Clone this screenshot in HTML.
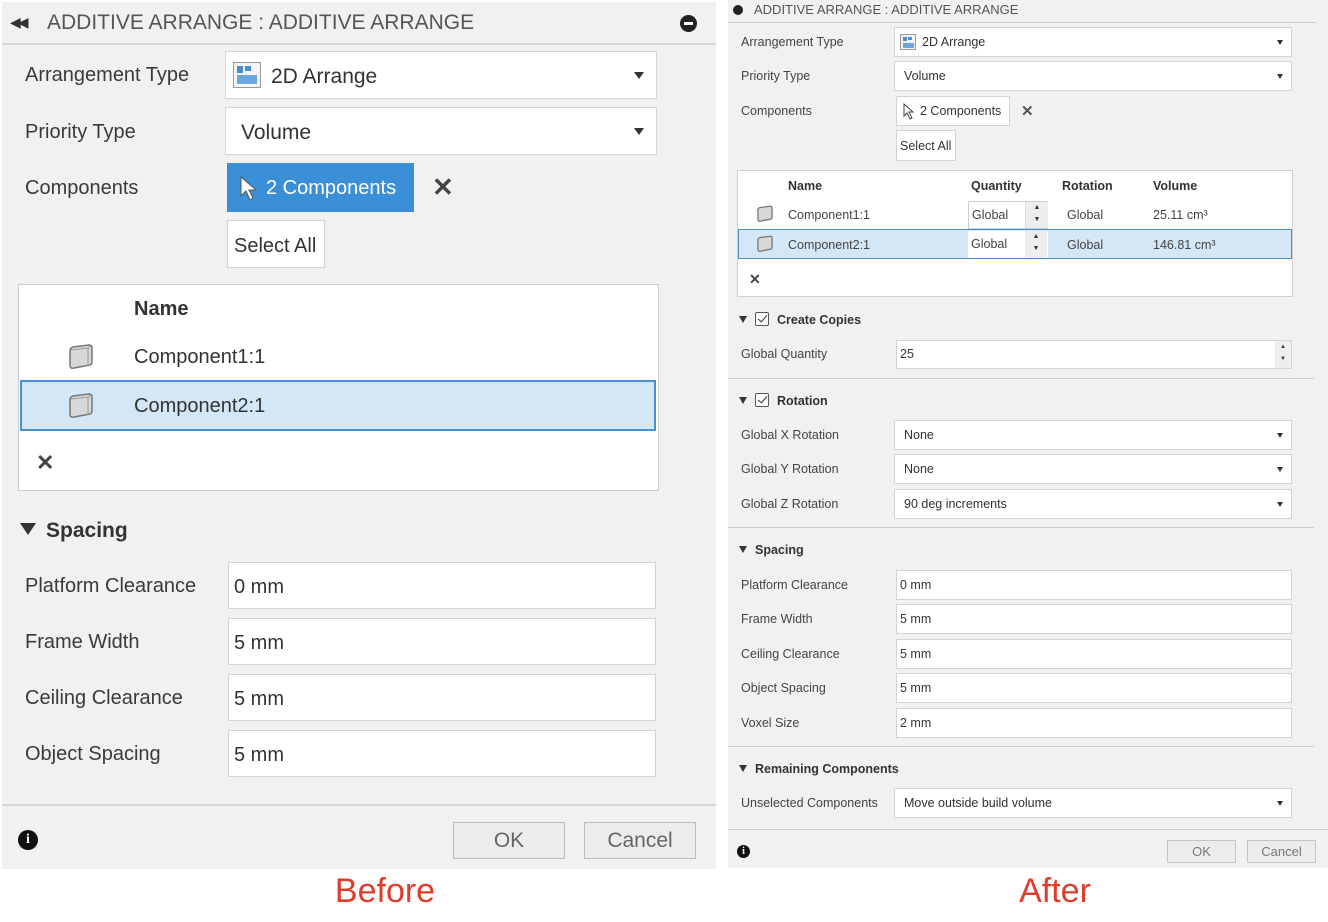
<!DOCTYPE html>
<html><head><meta charset="utf-8"><style>
*{margin:0;padding:0;box-sizing:border-box}
body{width:1328px;height:922px;background:#fff;position:relative;overflow:hidden;font-family:"Liberation Sans",Arial,sans-serif;color:#333}
.a{position:absolute}
.p{background:#f1f1f1}
.L{font-size:20px;color:#3a3a3a;white-space:nowrap}
.box{position:absolute;background:#fff;border:1px solid #d4d4d4}
.dd:after{content:"";position:absolute;right:12px;top:50%;margin-top:-3px;border-left:5px solid transparent;border-right:5px solid transparent;border-top:7px solid #333}
.ds:after{content:"";position:absolute;right:8px;top:50%;margin-top:-2px;border-left:3px solid transparent;border-right:3px solid transparent;border-top:5px solid #333}
.S{font-size:12.5px;color:#444;white-space:nowrap}
.sep{position:absolute;height:2px;background:#d6d6d6}
.tri{display:inline-block;border-left:8px solid transparent;border-right:8px solid transparent;border-top:12px solid #333;margin-right:10px;vertical-align:2px}
.tri2{display:inline-block;border-left:4px solid transparent;border-right:4px solid transparent;border-top:7px solid #333;margin-right:8px;vertical-align:1px}
.cb{display:inline-block;width:14px;height:14px;border:1px solid #555;border-radius:2px;background:#fff;vertical-align:-2px;margin-right:8px;position:relative}
.cb:after{content:"";position:absolute;left:4px;top:0px;width:4px;height:8px;border:solid #333;border-width:0 1.5px 1.5px 0;transform:rotate(40deg)}
</style></head><body>

<!-- LEFT PANEL -->
<div class="a p" style="left:2px;top:2px;width:714px;height:867px"></div>
<div class="a" style="left:10px;top:14px;font-size:14px;color:#333;letter-spacing:-3px">◀◀</div>
<div class="a" style="left:47px;top:11px;font-size:21px;color:#555">ADDITIVE ARRANGE : ADDITIVE ARRANGE</div>
<div class="a" style="left:680px;top:15px;width:17px;height:17px;border-radius:50%;background:#222"><div class="a" style="left:4px;top:7px;width:9px;height:3px;background:#fff"></div></div>
<div class="sep" style="left:2px;top:43px;width:714px"></div>

<div class="a L" style="left:25px;top:64px">Arrangement Type</div>
<div class="box dd" style="left:225px;top:51px;width:432px;height:48px">
 <div class="a" style="left:7px;top:10px;width:28px;height:26px;border:1px solid #999;background:#f5f5f5">
  <div class="a" style="left:3px;top:3px;width:6px;height:7px;background:#4a8fd6"></div>
  <div class="a" style="left:11px;top:3px;width:6px;height:5px;background:#4a8fd6"></div>
  <div class="a" style="left:3px;top:12px;width:20px;height:9px;background:#6aa6e0"></div>
 </div>
 <div class="a" style="left:45px;top:13px;font-size:21px;color:#333">2D Arrange</div>
</div>
<div class="a L" style="left:25px;top:121px">Priority Type</div>
<div class="box dd" style="left:225px;top:107px;width:432px;height:48px"><div class="a" style="left:15px;top:13px;font-size:21px;color:#333">Volume</div></div>
<div class="a L" style="left:25px;top:177px">Components</div>
<div class="a" style="left:227px;top:163px;width:187px;height:49px;background:#3b8fd6">
 <svg class="a" style="left:12px;top:12px" width="20" height="28" viewBox="0 0 20 28"><path d="M2 2 L2 21 L7 16 L11 25 L14 23 L10 15 L17 15 Z" fill="#fff" stroke="#555" stroke-width="1"/></svg>
 <div class="a" style="left:39px;top:14px;font-size:20px;color:#fff">2 Components</div>
</div>
<div class="a" style="left:432px;top:172px;font-size:26px;color:#444;font-weight:bold">✕</div>
<div class="box" style="left:227px;top:220px;width:98px;height:48px"><div class="a" style="left:6px;top:14px;font-size:20px;color:#333">Select All</div></div>

<div class="box" style="left:18px;top:284px;width:641px;height:207px;border-color:#ccc">
 <div class="a" style="left:115px;top:13px;font-size:20px;font-weight:bold;color:#333">Name</div>
 <svg class="a" style="left:48px;top:58px" width="28" height="28" viewBox="0 0 28 28"><path d="M3 8 Q3 5 6 4 L22 2 Q25 2 25 5 L25 19 Q25 21 23 22 L7 25 Q3 26 3 22 Z" fill="#d8d8d8" stroke="#777" stroke-width="1.5"/><path d="M4 7 L21 5 L21 23 M21 5 L24 3" fill="none" stroke="#999" stroke-width="1"/></svg>
 <div class="a" style="left:115px;top:61px;font-size:20px;color:#333">Component1:1</div>
 <div class="a" style="left:1px;top:95px;width:636px;height:51px;background:#d4e7f6;border:2px solid #4a90d0"></div>
 <svg class="a" style="left:48px;top:107px" width="28" height="28" viewBox="0 0 28 28"><path d="M3 8 Q3 5 6 4 L22 2 Q25 2 25 5 L25 19 Q25 21 23 22 L7 25 Q3 26 3 22 Z" fill="#d8d8d8" stroke="#777" stroke-width="1.5"/><path d="M4 7 L21 5 L21 23 M21 5 L24 3" fill="none" stroke="#999" stroke-width="1"/></svg>
 <div class="a" style="left:115px;top:110px;font-size:20px;color:#333">Component2:1</div>
 <div class="a" style="left:17px;top:165px;font-size:22px;color:#444;font-weight:bold">✕</div>
</div>

<div class="a" style="left:20px;top:519px;font-size:21px;font-weight:bold;color:#333"><span class="tri"></span>Spacing</div>
<div class="a L" style="left:25px;top:575px">Platform Clearance</div>
<div class="box" style="left:228px;top:562px;width:428px;height:47px"><div class="a" style="left:5px;top:13px;font-size:20px">0 mm</div></div>
<div class="a L" style="left:25px;top:631px">Frame Width</div>
<div class="box" style="left:228px;top:618px;width:428px;height:47px"><div class="a" style="left:5px;top:13px;font-size:20px">5 mm</div></div>
<div class="a L" style="left:25px;top:687px">Ceiling Clearance</div>
<div class="box" style="left:228px;top:674px;width:428px;height:47px"><div class="a" style="left:5px;top:13px;font-size:20px">5 mm</div></div>
<div class="a L" style="left:25px;top:743px">Object Spacing</div>
<div class="box" style="left:228px;top:730px;width:428px;height:47px"><div class="a" style="left:5px;top:13px;font-size:20px">5 mm</div></div>
<div class="sep" style="left:2px;top:804px;width:714px"></div>
<div class="a" style="left:18px;top:830px;width:20px;height:20px;border-radius:50%;background:#111;color:#fff;font:bold 14px 'Liberation Serif',serif;text-align:center;line-height:20px">i</div>
<div class="a" style="left:453px;top:822px;width:112px;height:37px;border:1px solid #bbb;background:#ececec;font-size:21px;color:#666;text-align:center;line-height:35px">OK</div>
<div class="a" style="left:584px;top:822px;width:112px;height:37px;border:1px solid #bbb;background:#ececec;font-size:21px;color:#666;text-align:center;line-height:35px">Cancel</div>
<div class="a" style="left:285px;top:872px;width:200px;text-align:center;font-size:34px;color:#e03c2c">Before</div>

<!-- RIGHT PANEL -->
<div class="a p" style="left:728px;top:0;width:600px;height:868px"></div>
<div class="a" style="left:733px;top:5px;width:10px;height:10px;border-radius:50%;background:#222"></div>
<div class="a" style="left:754px;top:2px;font-size:13px;color:#555">ADDITIVE ARRANGE : ADDITIVE ARRANGE</div>
<div class="sep" style="left:728px;top:22px;width:588px;height:1px;background:#ccc"></div>

<div class="a S" style="left:741px;top:35px">Arrangement Type</div>
<div class="box ds" style="left:894px;top:27px;width:398px;height:30px">
 <div class="a" style="left:5px;top:6px;width:16px;height:16px;border:1px solid #999;background:#f5f5f5"><div class="a" style="left:2px;top:2px;width:4px;height:4px;background:#4a8fd6"></div><div class="a" style="left:7px;top:2px;width:4px;height:3px;background:#4a8fd6"></div><div class="a" style="left:2px;top:8px;width:11px;height:5px;background:#6aa6e0"></div></div>
 <div class="a S" style="left:27px;top:7px;color:#333">2D Arrange</div>
</div>
<div class="a S" style="left:741px;top:69px">Priority Type</div>
<div class="box ds" style="left:894px;top:61px;width:398px;height:30px"><div class="a S" style="left:9px;top:7px;color:#333">Volume</div></div>
<div class="a S" style="left:741px;top:104px">Components</div>
<div class="box" style="left:896px;top:96px;width:114px;height:30px">
 <svg class="a" style="left:6px;top:6px" width="12" height="18" viewBox="0 0 12 18"><path d="M1 1 L1 13 L4 10 L7 16 L9 15 L6 9 L10 9 Z" fill="#fff" stroke="#444" stroke-width="1"/></svg>
 <div class="a S" style="left:23px;top:7px;color:#333">2 Components</div>
</div>
<div class="a" style="left:1021px;top:102px;font-size:15px;color:#555;font-weight:bold">✕</div>
<div class="box" style="left:896px;top:130px;width:60px;height:31px"><div class="a S" style="left:3px;top:8px;color:#333">Select All</div></div>

<div class="box" style="left:737px;top:170px;width:556px;height:127px;border-color:#d0d0d0">
 <div class="a S" style="left:50px;top:8px;font-weight:bold;color:#333">Name</div>
 <div class="a S" style="left:233px;top:8px;font-weight:bold;color:#333">Quantity</div>
 <div class="a S" style="left:324px;top:8px;font-weight:bold;color:#333">Rotation</div>
 <div class="a S" style="left:415px;top:8px;font-weight:bold;color:#333">Volume</div>
 <svg class="a" style="left:18px;top:34px" width="18" height="18" viewBox="0 0 28 28"><path d="M3 8 Q3 5 6 4 L22 2 Q25 2 25 5 L25 19 Q25 21 23 22 L7 25 Q3 26 3 22 Z" fill="#d8d8d8" stroke="#777" stroke-width="2"/></svg>
 <div class="a S" style="left:50px;top:37px">Component1:1</div>
 <div class="a" style="left:230px;top:30px;width:80px;height:28px;border:1px solid #ccc;background:#fff"><div class="a S" style="left:3px;top:6px">Global</div><div class="a" style="left:56px;top:0;width:1px;height:26px;background:#ddd"></div><div class="a" style="left:57px;top:0;width:22px;height:26px;background:#eee;font-size:7px;text-align:center;line-height:12px">▲<br>▼</div></div>
 <div class="a S" style="left:329px;top:37px">Global</div>
 <div class="a S" style="left:415px;top:37px">25.11 cm³</div>
 <div class="a" style="left:0;top:58px;width:554px;height:30px;background:#d4e7f6;border:1px solid #4a90d0"></div>
 <svg class="a" style="left:18px;top:64px" width="18" height="18" viewBox="0 0 28 28"><path d="M3 8 Q3 5 6 4 L22 2 Q25 2 25 5 L25 19 Q25 21 23 22 L7 25 Q3 26 3 22 Z" fill="#d8d8d8" stroke="#777" stroke-width="2"/></svg>
 <div class="a S" style="left:50px;top:67px">Component2:1</div>
 <div class="a" style="left:230px;top:60px;width:80px;height:27px;background:#fff"><div class="a S" style="left:3px;top:6px">Global</div><div class="a" style="left:57px;top:0;width:22px;height:27px;background:#eee;font-size:7px;text-align:center;line-height:12px">▲<br>▼</div></div>
 <div class="a S" style="left:329px;top:67px">Global</div>
 <div class="a S" style="left:415px;top:67px">146.81 cm³</div>
 <div class="a" style="left:11px;top:100px;font-size:14px;color:#444;font-weight:bold">✕</div>
</div>

<div class="a S" style="left:739px;top:312px;font-weight:bold;color:#333"><span class="tri2"></span><span class="cb"></span>Create Copies</div>
<div class="a S" style="left:741px;top:347px">Global Quantity</div>
<div class="box" style="left:896px;top:340px;width:396px;height:29px"><div class="a S" style="left:3px;top:6px;color:#333">25</div><div class="a" style="left:378px;top:0;width:16px;height:27px;background:#eee;font-size:6px;text-align:center;line-height:12px">▲<br>▼</div></div>
<div class="sep" style="left:728px;top:378px;width:586px;height:1px;background:#ccc"></div>

<div class="a S" style="left:739px;top:393px;font-weight:bold;color:#333"><span class="tri2"></span><span class="cb"></span>Rotation</div>
<div class="a S" style="left:741px;top:428px">Global X Rotation</div>
<div class="box ds" style="left:894px;top:420px;width:398px;height:30px"><div class="a S" style="left:9px;top:7px;color:#333">None</div></div>
<div class="a S" style="left:741px;top:462px">Global Y Rotation</div>
<div class="box ds" style="left:894px;top:454px;width:398px;height:30px"><div class="a S" style="left:9px;top:7px;color:#333">None</div></div>
<div class="a S" style="left:741px;top:497px">Global Z Rotation</div>
<div class="box ds" style="left:894px;top:489px;width:398px;height:30px"><div class="a S" style="left:9px;top:7px;color:#333">90 deg increments</div></div>
<div class="sep" style="left:728px;top:527px;width:586px;height:1px;background:#ccc"></div>

<div class="a S" style="left:739px;top:543px;font-weight:bold;color:#333"><span class="tri2"></span>Spacing</div>
<div class="a S" style="left:741px;top:578px">Platform Clearance</div>
<div class="box" style="left:896px;top:570px;width:396px;height:30px"><div class="a S" style="left:3px;top:7px;color:#333">0 mm</div></div>
<div class="a S" style="left:741px;top:612px">Frame Width</div>
<div class="box" style="left:896px;top:604px;width:396px;height:30px"><div class="a S" style="left:3px;top:7px;color:#333">5 mm</div></div>
<div class="a S" style="left:741px;top:647px">Ceiling Clearance</div>
<div class="box" style="left:896px;top:639px;width:396px;height:30px"><div class="a S" style="left:3px;top:7px;color:#333">5 mm</div></div>
<div class="a S" style="left:741px;top:681px">Object Spacing</div>
<div class="box" style="left:896px;top:673px;width:396px;height:30px"><div class="a S" style="left:3px;top:7px;color:#333">5 mm</div></div>
<div class="a S" style="left:741px;top:716px">Voxel Size</div>
<div class="box" style="left:896px;top:708px;width:396px;height:30px"><div class="a S" style="left:3px;top:7px;color:#333">2 mm</div></div>
<div class="sep" style="left:728px;top:746px;width:586px;height:1px;background:#ccc"></div>

<div class="a S" style="left:739px;top:762px;font-weight:bold;color:#333"><span class="tri2"></span>Remaining Components</div>
<div class="a S" style="left:741px;top:796px">Unselected Components</div>
<div class="box ds" style="left:894px;top:788px;width:398px;height:30px"><div class="a S" style="left:9px;top:7px;color:#333">Move outside build volume</div></div>
<div class="sep" style="left:728px;top:829px;width:600px;height:1px;background:#ccc"></div>
<div class="a" style="left:737px;top:845px;width:13px;height:13px;border-radius:50%;background:#111;color:#fff;font:bold 10px 'Liberation Serif',serif;text-align:center;line-height:13px">i</div>
<div class="a" style="left:1167px;top:840px;width:69px;height:23px;border:1px solid #c4c4c4;background:#ececec;font-size:13px;color:#777;text-align:center;line-height:21px">OK</div>
<div class="a" style="left:1247px;top:840px;width:69px;height:23px;border:1px solid #c4c4c4;background:#ececec;font-size:13px;color:#777;text-align:center;line-height:21px">Cancel</div>
<div class="a" style="left:955px;top:872px;width:200px;text-align:center;font-size:34px;color:#e03c2c">After</div>
</body></html>
